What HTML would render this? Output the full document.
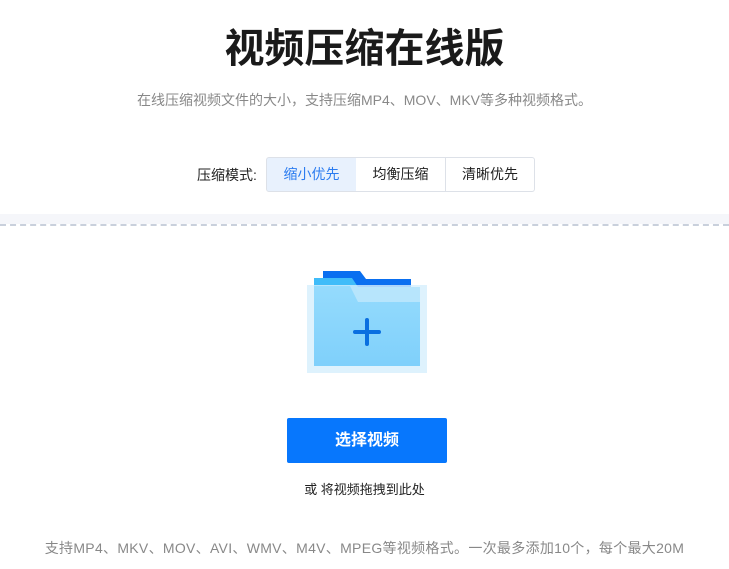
<!DOCTYPE html>
<html><head><meta charset="utf-8"><style>
body{margin:0;width:729px;height:569px;background:#fff;font-family:"Liberation Sans","Noto Sans CJK SC",sans-serif;position:relative;overflow:hidden}
.a{position:absolute;white-space:nowrap}
.t{left:0;width:729px;text-align:center}
.btn{position:absolute;top:157px;height:33px;border:1px solid #dde1e8;background:#fff;font-size:14px;color:#222;text-align:center;line-height:33px}
</style></head><body>
<div class="a t" style="top:24px;font-size:40px;font-weight:bold;color:#1a1a1a;line-height:50px">视频压缩在线版</div>
<div class="a t" style="top:91px;font-size:14px;color:#888;line-height:18px">在线压缩视频文件的大小，支持压缩MP4、MOV、MKV等多种视频格式。</div>
<div class="a" style="left:197px;top:166px;font-size:14px;color:#222;line-height:18px">压缩模式:</div>
<div class="btn" style="left:266px;width:89px;background:#e8f1fd;color:#2b7cf0;border-radius:3px 0 0 3px">缩小优先</div>
<div class="btn" style="left:356px;width:89px;border-left:none">均衡压缩</div>
<div class="btn" style="left:446px;width:88px;border-left:none;border-radius:0 3px 3px 0">清晰优先</div>
<div class="a" style="left:0;top:214px;width:729px;height:10px;background:#f5f6fa"></div>
<div class="a" style="left:0;top:224px;width:729px;height:0;border-top:2px dashed #c9d0dc"></div>
<svg class="a" style="left:0;top:0" width="729" height="569">
<defs><linearGradient id="g" x1="0" y1="0" x2="0" y2="1"><stop offset="0" stop-color="#95dbfd"/><stop offset="1" stop-color="#7fd0fb"/></linearGradient></defs>
<path d="M323 271H360L366 279H411V292H323Z" fill="#0a6ff0"/>
<path d="M314 278H352L358 287H420V302H314Z" fill="#3fbcf9"/>
<rect x="307" y="285" width="120" height="88" fill="#d6effd" opacity="0.8"/>
<path d="M314 286H350L358 302H420V366H314Z" fill="url(#g)"/>
<path d="M355 332H379M367 320V344" stroke="#0a6fe0" stroke-width="4" stroke-linecap="round"/>
</svg>
<div class="a" style="left:287px;top:418px;width:160px;height:45px;background:#0777fd;border-radius:2px;color:#fff;font-size:16px;font-weight:bold;text-align:center;line-height:45px">选择视频</div>
<div class="a t" style="top:481px;font-size:13px;color:#222;line-height:18px">或 将视频拖拽到此处</div>
<div class="a t" style="top:539px;font-size:14px;letter-spacing:0.3px;color:#888;line-height:18px">支持MP4、MKV、MOV、AVI、WMV、M4V、MPEG等视频格式。一次最多添加10个，每个最大20M</div>
</body></html>
